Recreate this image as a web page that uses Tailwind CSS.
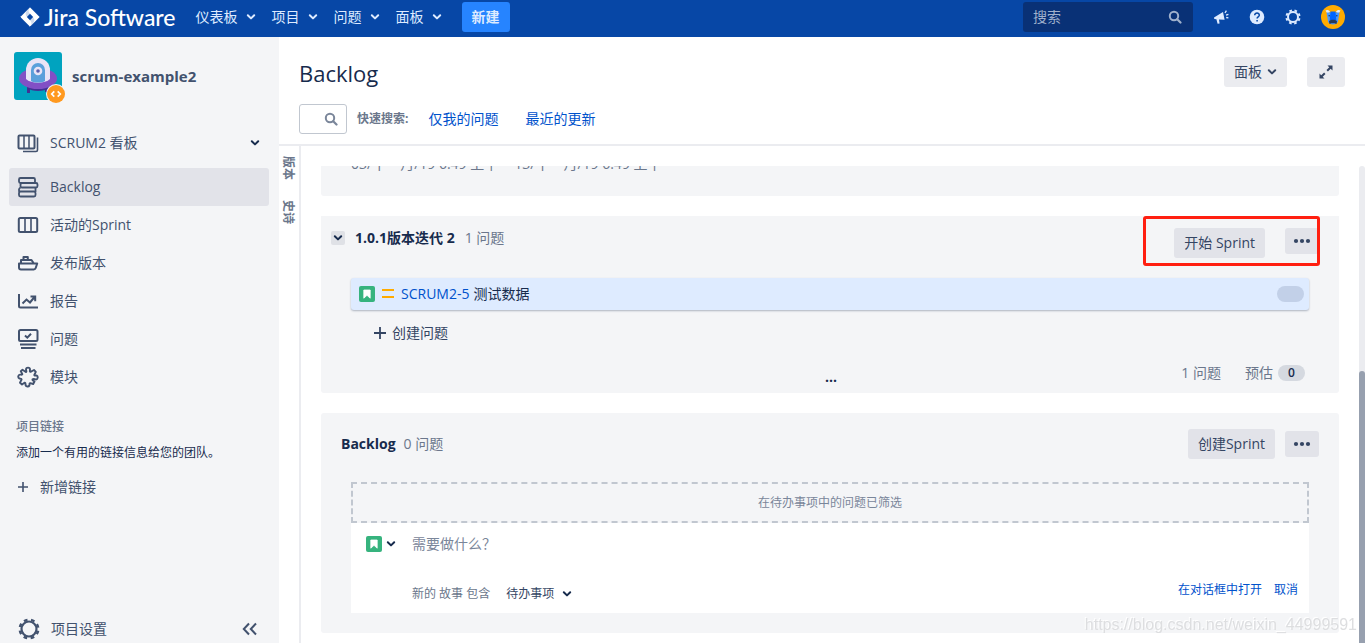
<!DOCTYPE html>
<html lang="zh-CN">
<head>
<meta charset="utf-8">
<meta name="viewport" content="width=device-width, initial-scale=1">
<title>Backlog - Jira Software</title>
<script src="https://cdn.jsdelivr.net/npm/@tailwindcss/browser@4"></script>
</head>
<body class="flex h-screen flex-col overflow-hidden bg-white font-['Open_Sans','Noto_Sans_CJK_SC',sans-serif] text-sm leading-5 text-[#172b4d]">
<svg class="hidden">
  <symbol id="chev" viewBox="0 0 10 10"><path d="M1.8 3.2 5 6.4l3.2-3.2" fill="none" stroke="currentColor" stroke-width="2" stroke-linecap="round" stroke-linejoin="round"/></symbol>
  <symbol id="dots" viewBox="0 0 18 6"><circle cx="3" cy="3" r="2.1"/><circle cx="9" cy="3" r="2.1"/><circle cx="15" cy="3" r="2.1"/></symbol>
  <symbol id="lens" viewBox="0 0 14 14"><circle cx="6" cy="6" r="4.2" fill="none" stroke="currentColor" stroke-width="2"/><path d="m9.2 9.2 3.3 3.3" stroke="currentColor" stroke-width="2.2" stroke-linecap="round"/></symbol>
  <symbol id="story" viewBox="0 0 16 16"><rect width="16" height="16" rx="2" fill="#36b37e"/><path d="M4.800 4h6.400v8.200L8 9.300l-3.200 2.900z" fill="#fff" stroke="#fff" stroke-width=".8" stroke-linejoin="round"/></symbol>
</svg>

<header class="flex h-[37px] shrink-0 items-center bg-[#0747a6] pb-[3px] pl-5 pr-5 text-[#deebff]">
  <a href="#" class="flex items-center gap-1 text-white">
    <svg class="h-5 w-5" viewBox="0 0 20 20"><path d="M10 .8 19.2 10 10 19.2.8 10Z" fill="#fff" stroke="#fff" stroke-linejoin="round"/><path d="M10 6.8 13.2 10 10 13.2 6.800 10Z" fill="#0747a6"/><path d="M10 .8C8 3 8 5 10 6.800L7 9.800C4.800 7.500 5.500 5.200 7.500 3.300Z" fill="#0747a6" opacity=".2"/><path d="M10 19.2C12 17 12 15 10 13.200L13 10.200C15.200 12.500 14.500 14.800 12.500 16.700Z" fill="#0747a6" opacity=".2"/></svg>
    <span class="font-['Lato',sans-serif] text-[23px] font-medium leading-6">Jira Software</span>
  </a>
  <nav class="ml-5 flex items-center gap-4">
    <button class="flex items-center gap-2">仪表板<svg class="h-[10px] w-[10px]"><use href="#chev"/></svg></button>
    <button class="flex items-center gap-2">项目<svg class="h-[10px] w-[10px]"><use href="#chev"/></svg></button>
    <button class="flex items-center gap-2">问题<svg class="h-[10px] w-[10px]"><use href="#chev"/></svg></button>
    <button class="flex items-center gap-2">面板<svg class="h-[10px] w-[10px]"><use href="#chev"/></svg></button>
  </nav>
  <button class="ml-5 h-[30px] rounded-[3px] bg-[#2684ff] px-[10px] font-bold">新建</button>
  <div class="ml-auto flex items-center">
    <label class="flex h-[30px] w-[170px] items-center rounded-[3px] bg-[#093176] pl-[10px] pr-[11px] text-[#9fb0cc]">
      <input type="text" aria-label="搜索" placeholder="搜索" class="min-w-0 flex-1 bg-transparent outline-none placeholder:text-[#9fb0cc]">
      <svg class="h-[14px] w-[14px]"><use href="#lens"/></svg>
    </label>
    <button aria-label="反馈" class="ml-5"><svg class="h-4 w-4" viewBox="0 0 16 16"><path d="M1 8.500 10 3l1.600 7.800-5.600-.3.600 4-2 .3-1.200-4.500-2.100-.3Z" fill="currentColor"/><path d="m12 4 1.400-2.300M13 6.200l2.400-.9M13.200 8.500l2.200.4" stroke="currentColor" stroke-width="1.300" fill="none"/></svg></button>
    <button aria-label="帮助" class="ml-5"><svg class="h-4 w-4" viewBox="0 0 16 16"><circle cx="8" cy="8" r="7.300" fill="currentColor"/><path d="M5.700 6.200C5.700 3.300 10.400 3.400 10.300 6.200 10.200 7.800 8.100 7.800 8.100 9.400M8.100 10.900v1.600" stroke="#0747a6" stroke-width="1.500" fill="none"/></svg></button>
    <button aria-label="设置" class="ml-5"><svg class="h-4 w-4" viewBox="0 0 16 16" fill="none" stroke="currentColor"><circle cx="8" cy="8" r="5" stroke-width="2"/><circle cx="8" cy="8" r="6.600" stroke-width="2" stroke-dasharray="2.600 2.580" stroke-dashoffset="-1.300"/></svg></button>
    <button aria-label="用户" class="ml-5"><svg class="h-6 w-6" viewBox="0 0 24 24"><circle cx="12" cy="12" r="12" fill="#ffab00"/><path d="M4.500 5.500C6 4.500 8 5 9 6.500L6.500 9Z" fill="#deebff"/><path d="M19.500 5.500C18 4.500 16 5 15 6.500L17.500 9Z" fill="#deebff"/><path d="M5.500 7.500h13l-1.500 9c-1 4-9 4-10 0Z" fill="#4c9aff"/><path d="M9.500 6.500h5l.8 8.500H8.700Z" fill="#0065ff"/><path d="M8 16.500c0-2.500 8-2.500 8 0l-.5 2.500-2-.8h-3l-2 .8Z" fill="#253858"/><circle cx="8.200" cy="10.800" r=".8" fill="#253858"/><circle cx="15.800" cy="10.800" r=".8" fill="#253858"/></svg></button>
  </div>
</header>

<div class="flex min-h-0 flex-1">
  <aside class="flex w-[279px] shrink-0 flex-col bg-[#f4f5f7] pl-[9px] pr-[10px] pt-[15px] text-[#42526e]">
    <a href="#" class="flex items-center gap-[10px] pl-[5px] text-[15px] font-bold">
      <span class="relative">
        <svg class="h-12 w-12" viewBox="0 0 48 48"><rect width="48" height="48" rx="3" fill="#00a3bf"/><path d="M13 35h3v6h-3zM31 35h3v5h-3z" fill="#403294"/><path d="M13 33h22v3c-5 4-17 4-22 0Z" fill="#403294"/><ellipse cx="24" cy="26.500" rx="19" ry="10.500" fill="#8250c5"/><path d="M12 27V18a12 12 0 0 1 24 0v9c-5 5-19 5-24 0Z" fill="#e9e4f6"/><path d="M17 29V18a7 7 0 0 1 14 0v11c-3 2-11 2-14 0Z" fill="#5ba0db"/><circle cx="24" cy="19" r="4.300" fill="#e9e4f6"/><circle cx="24" cy="19" r="1.800" fill="#5a5fae"/></svg>
        <svg class="absolute -bottom-1 -right-1 h-5 w-5" viewBox="0 0 20 20"><circle cx="10" cy="10" r="10" fill="#f4f5f7"/><circle cx="10" cy="10" r="9" fill="#ff991f"/><path d="M8.300 7.300 5.700 10l2.600 2.700M11.700 7.300l2.600 2.700-2.600 2.700" fill="none" stroke="#fff" stroke-width="1.700"/></svg>
      </span>
      scrum-example2
    </a>
    <nav class="mt-6 flex flex-col">
      <button class="mb-[6px] flex h-[38px] items-center gap-[11px] pl-2 pr-[9px] text-left">
        <svg class="h-[22px] w-[22px]" viewBox="0 0 22 22" fill="none" stroke="currentColor" stroke-width="2"><rect x="1.500" y="3.500" width="16" height="13" rx="1"/><path d="M7 4v12M12 4v12" stroke-width="1.500"/><path d="M20.500 5.500v12.500a1.500 1.500 0 0 1-1.500 1.500H6" stroke-width="1.600"/></svg>
        SCRUM2 看板
        <svg class="ml-auto h-[10px] w-[10px] text-[#172b4d]"><use href="#chev"/></svg>
      </button>
      <a href="#" aria-current="page" class="flex h-[38px] items-center gap-[11px] rounded-[3px] bg-[#e2e3e9] px-2 font-medium">
        <svg class="h-[22px] w-[22px]" viewBox="0 0 22 22" fill="none" stroke="currentColor" stroke-width="1.800"><rect x="2" y="2" width="16" height="5" rx="1.500"/><rect x="3.500" y="7" width="17" height="4.500" rx="1.500"/><path d="M3.500 11.500C1.500 12.500 1.500 15 3 16M18.500 11.500v4.500"/><rect x="2" y="15.500" width="16.500" height="5" rx="1.500"/></svg>
        Backlog
      </a>
      <a href="#" class="flex h-[38px] items-center gap-[11px] px-2">
        <svg class="h-[22px] w-[22px]" viewBox="0 0 22 22" fill="none" stroke="currentColor" stroke-width="2"><rect x="1.800" y="4" width="18.400" height="14" rx="1.500"/><path d="M8 4v14M14 4v14" stroke-width="1.600"/></svg>
        活动的Sprint
      </a>
      <a href="#" class="flex h-[38px] items-center gap-[11px] px-2">
        <svg class="h-[22px] w-[22px]" viewBox="0 0 22 22" fill="none" stroke="currentColor" stroke-width="2" stroke-linejoin="round"><path d="M2 11.500h18.200l-1.500 4.500a2 2 0 0 1-1.900 1.400H4a2 2 0 0 1-2-2ZM4 11V8h10.500l2 3M6.500 7.500V5h4.300v2.500"/></svg>
        发布版本
      </a>
      <a href="#" class="flex h-[38px] items-center gap-[11px] px-2">
        <svg class="h-[22px] w-[22px]" viewBox="0 0 22 22" fill="none" stroke="currentColor" stroke-width="2"><path d="M2 4v12a1.500 1.500 0 0 0 1.500 1.500H21M5.500 13.500 9.500 9.500l3.500 3 4.500-5.500M13.500 6.500h4.700v4.700"/></svg>
        报告
      </a>
      <a href="#" class="flex h-[38px] items-center gap-[11px] px-2">
        <svg class="h-[22px] w-[22px]" viewBox="0 0 22 22" fill="none" stroke="currentColor" stroke-width="2"><rect x="2" y="2" width="18.500" height="11" rx="1.500"/><path d="m8 7.500 2.300 2.200L14 5.800M3 16.500h16.500M4 20h14.500"/></svg>
        问题
      </a>
      <a href="#" class="flex h-[38px] items-center gap-[11px] px-2">
        <svg class="h-[22px] w-[22px]" viewBox="0 0 22 22" fill="none" stroke="currentColor" stroke-width="1.900" stroke-linejoin="round"><path d="M5.500 3.800 8.800 6C10 6 9 4.500 9 3.500 9 1 13 1 13 3.500c0 1-.6 2.300.5 2.300L17 4l1.800 1.800L17.300 9c0 1.200 1.700.3 2.500.6 1.500.9 1 3.700-.8 3.900-1 .1-2.300-1.300-3.300-.3-.8 1 .9 1.500 1.800 2.300l-1.300 2.500-3-.8c-1.200 0-.4 1.300-.8 2.300-.7 1.500-3.600 1.300-3.900-.5-.1-1 .2-2.500-1-2.300L5 18.500l-2-1.800L4.600 13.500c0-1.200-1.300-.6-2.300-1-1.700-.9-1.200-3.700.7-3.900 1 0 2.200.6 2.400-.5L3.800 5.300Z"/></svg>
        模块
      </a>
    </nav>
    <section class="mt-[21px] pl-[7px]">
      <h2 class="text-xs font-medium leading-5 text-[#6b778c]">项目链接</h2>
      <p class="mt-[6px] text-xs leading-5 text-[#172b4d]">添加一个有用的链接信息给您的团队。</p>
      <button class="mt-[14px] flex items-center gap-[10px]"><svg class="h-[14px] w-[14px]" viewBox="0 0 14 14"><path d="M7 2v10M2 7h10" stroke="currentColor" stroke-width="1.600"/></svg>新增链接</button>
    </section>
    <div class="mt-auto flex h-7 items-center pl-[9px] pr-[11px]">
      <a href="#" class="flex items-center gap-[11px]">
        <svg class="h-[22px] w-[22px]" viewBox="0 0 22 22" fill="none" stroke="currentColor"><circle cx="11" cy="11" r="7.500" stroke-width="2.200"/><circle cx="11" cy="11" r="9.300" stroke-width="2.400" stroke-dasharray="3.700 3.600" stroke-dashoffset="-1.800"/></svg>
        项目设置
      </a>
      <button aria-label="收起" class="ml-auto"><svg class="h-4 w-4" viewBox="0 0 16 16"><path d="M7 2.500 1.800 8 7 13.500M14 2.500 8.800 8l5.200 5.500" fill="none" stroke="currentColor" stroke-width="2"/></svg></button>
    </div>
  </aside>

  <main class="flex min-w-0 flex-1 flex-col">
    <div class="border-b-2 border-[#ebecf0] pb-[10px] pl-5 pr-5 pt-5">
      <div class="flex h-[30px] items-center">
        <h1 class="pt-[2px] text-[22px] leading-8">Backlog</h1>
        <button class="ml-auto flex h-[30px] items-center gap-[5px] rounded-[3px] bg-[#ebecf0] px-[10px] text-[#344563]">面板<svg class="h-[10px] w-[10px]"><use href="#chev"/></svg></button>
        <button aria-label="全屏" class="ml-5 flex h-[30px] w-[38px] items-center justify-center rounded-[3px] bg-[#ebecf0] text-[#344563]"><svg class="h-4 w-4" viewBox="0 0 16 16"><path d="M9.500 1.500h5v5ZM1.500 9.500v5h5Z" fill="currentColor"/><path d="m9.200 6.800 3.300-3.300M3.500 12.500l3.300-3.300" stroke="currentColor" stroke-width="2"/></svg></button>
      </div>
      <div class="mt-[17px] flex h-[30px] items-center">
        <label class="flex h-[30px] w-12 items-center rounded-[3px] border border-[#c1c7d0] pr-2 text-[#7a869a]">
          <input type="text" aria-label="搜索问题" class="min-w-0 flex-1 outline-none"><svg class="h-[14px] w-[14px]"><use href="#lens"/></svg>
        </label>
        <span class="ml-[10px] text-xs font-bold text-[#6b778c]">快速搜索:</span>
        <a href="#" class="ml-5 text-[#0052cc]">仅我的问题</a>
        <a href="#" class="ml-[27px] text-[#0052cc]">最近的更新</a>
      </div>
    </div>

    <div class="flex min-h-0 flex-1">
      <div class="flex w-[22px] shrink-0 flex-col items-start gap-5 border-r-2 border-[#ebecf0] pt-[10px] text-xs font-bold leading-[18px] text-[#6b778c]">
        <button class="[writing-mode:vertical-rl] [text-orientation:sideways]">版本</button>
        <button class="[writing-mode:vertical-rl] [text-orientation:sideways]">史诗</button>
      </div>

      <div class="mt-5 flex min-w-0 flex-1 overflow-hidden">
        <div class="flex min-w-0 flex-1 flex-col gap-5 pl-5 pr-5">
          <section class="flex h-[30px] shrink-0 flex-col justify-end overflow-hidden rounded-b-[3px] bg-[#f4f5f7] pb-[22px] pl-[30px]">
            <p class="flex gap-4 text-[#6b778c]"><span>03/十一月/19 6:49 上午</span><span>13/十一月/19 6:49 上午</span></p>
          </section>

          <section class="relative flex shrink-0 flex-col rounded-b-[3px] bg-[#f4f5f7] pl-[10px] pr-5 pt-3">
            <div class="flex h-[50px] items-start">
              <button aria-label="折叠" class="mt-[3px] flex h-[14px] w-[14px] items-center justify-center rounded-[2px] bg-[#dfe1e6]"><svg class="h-[10px] w-[10px]"><use href="#chev"/></svg></button>
              <h2 class="ml-[10px] font-bold">1.0.1版本迭代 2</h2>
              <span class="ml-[10px] text-[#6b778c]">1 问题</span>
              <button class="ml-auto h-[30px] rounded-[3px] bg-[#e2e3e9] px-[10px] text-[#344563]">开始 Sprint</button>
              <button aria-label="更多" class="ml-5 flex h-[26px] w-[34px] items-center justify-center rounded-[3px] bg-[#e2e3e9] text-[#344563]"><svg class="h-[6px] w-[18px] fill-current"><use href="#dots"/></svg></button>
            </div>
            <div class="ml-5 mr-[10px] flex h-8 items-center rounded-[3px] bg-[#deebff] pl-2 pr-[5px] shadow-[0_1px_2px_rgba(9,30,66,0.3)]">
              <svg class="h-4 w-4"><use href="#story"/></svg>
              <svg class="ml-[7px] h-3 w-3" viewBox="0 0 12 12"><path d="M0 2h12M0 9h12" stroke="#ffab00" stroke-width="2"/></svg>
              <a href="#" class="ml-[7px] text-[#0052cc]">SCRUM2-5</a>
              <span class="ml-1">测试数据</span>
              <span class="ml-auto h-4 w-[27px] rounded-full bg-[#c2d0e8]"></span>
            </div>
            <button class="ml-[42px] mt-[13px] flex items-center gap-[5px] self-start text-[#344563]"><svg class="h-[14px] w-[14px]" viewBox="0 0 14 14"><path d="M7 1v12M1 7h12" stroke="currentColor" stroke-width="1.800"/></svg>创建问题</button>
            <div class="mt-5 grid h-[30px] grid-cols-[1fr_auto_1fr] pl-3">
              <span class="col-start-2 pt-1 font-bold">...</span>
              <div class="flex h-5 items-center justify-end gap-6 pr-[14px] text-[#6b778c]">
                <span>1 问题</span>
                <span class="flex items-center gap-[5px]">预估<b class="flex h-4 w-[27px] items-center justify-center rounded-full bg-[#d5d9e0] text-xs font-semibold text-[#172b4d]">0</b></span>
              </div>
            </div>
            <div class="pointer-events-none absolute right-[19px] top-0 h-[50px] w-[177px] rounded-[3px] border-3 border-[#ff1f10]"></div>
          </section>

          <section class="flex shrink-0 flex-col rounded-[3px] bg-[#f4f5f7] px-[30px] pb-5 pt-4">
            <div class="-mx-[10px] flex h-[30px] items-center">
              <h2 class="font-bold">Backlog</h2>
              <span class="ml-2 text-[#6b778c]">0 问题</span>
              <button class="ml-auto h-[30px] rounded-[3px] bg-[#e2e3e9] px-[10px] text-[#344563]">创建Sprint</button>
              <button aria-label="更多" class="ml-[10px] flex h-[26px] w-[34px] items-center justify-center rounded-[3px] bg-[#e2e3e9] text-[#344563]"><svg class="h-[6px] w-[18px] fill-current"><use href="#dots"/></svg></button>
            </div>
            <p class="mt-[23px] flex h-[41px] items-center justify-center border-2 border-dashed border-[#c1c7d0] text-xs text-[#7a869a]">在待办事项中的问题已筛选</p>
            <form class="flex h-[90px] flex-col bg-white pl-[15px] pr-[11px] pt-[11px]">
              <div class="flex items-center">
                <button type="button" aria-label="故事" class="flex w-[46px] items-center gap-1"><svg class="h-4 w-4"><use href="#story"/></svg><svg class="h-[10px] w-[10px]"><use href="#chev"/></svg></button>
                <input type="text" aria-label="需要做什么？" placeholder="需要做什么？" class="h-5 flex-1 outline-none placeholder:text-[#7a869a]">
              </div>
              <div class="mt-[26px] flex items-start pl-[46px] text-xs leading-5">
                <label for="dest" class="mt-1 text-[#6b778c]">新的 故事 包含</label>
                <select id="dest" class="ml-4 mt-1 h-5 appearance-none text-[#344563]"><option>待办事项</option></select>
                <svg class="ml-[7px] mt-[9px] h-[10px] w-[10px]"><use href="#chev"/></svg>
                <a href="#" class="ml-auto text-[#0052cc]">在对话框中打开</a>
                <a href="#" class="ml-3 text-[#0052cc]">取消</a>
              </div>
            </form>
          </section>
        </div>
        <div class="flex w-[6px] shrink-0 flex-col justify-end rounded-t-full bg-[#ebecf0]"><div class="h-[57%] rounded-t-full bg-[#97a0af]"></div></div>
      </div>
    </div>
  </main>
</div>
<div class="pointer-events-none fixed bottom-2 right-2 font-['Liberation_Sans',sans-serif] text-base leading-5 text-[#dddee0] [text-shadow:-1px_-1px_0_#fff]">https://blog.csdn.net/weixin_44999591</div>
</body>
</html>
